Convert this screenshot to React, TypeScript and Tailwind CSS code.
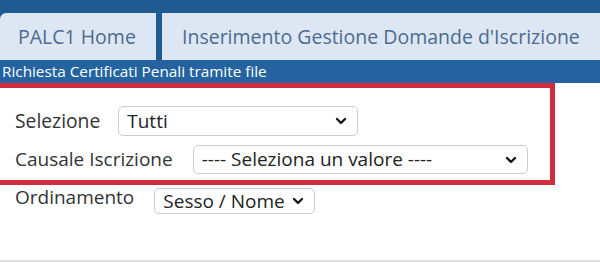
import { ChevronDown } from "lucide-react";

interface FakeSelectProps {
  value: string;
  width: string;
  height: string;
}

function FakeSelect({ value, width, height }: FakeSelectProps) {
  return (
    <div
      className={`flex items-center justify-between rounded-[5px] border border-[#c9ccd1] bg-white pl-2 pr-2 text-[19px] text-[#222] ${width} ${height}`}
    >
      <span className="leading-none">{value}</span>
      <ChevronDown size={16} strokeWidth={3.5} className="text-[#111]" />
    </div>
  );
}

export default function App() {
  return (
    <div className="h-[262px] w-[600px] overflow-hidden border-b-2 border-[#dedede] bg-white font-['Open_Sans',sans-serif]">
      <div className="bg-[#1f5a90] pt-[13px]">
        <div className="flex h-[47px] gap-[6px]">
          <div className="flex w-[156px] items-center rounded-tl-[6px] bg-[#dde7f3] pl-[18px] text-[19.5px] text-[#4d6a90]">
            PALC1 Home
          </div>
          <div className="flex flex-1 items-center bg-[#dde7f3] pl-[20px] text-[19.5px] text-[#4d6a90]">
            Inserimento Gestione Domande d'Iscrizione
          </div>
        </div>
        <div className="h-[23px] bg-[#2463a0] pl-[2px] pt-[2px] text-[15.3px] leading-[18px] text-white">
          Richiesta Certificati Penali tramite file
        </div>
      </div>

      <div className="w-[555px] border-y-[5px] border-r-[5px] border-[#d12b3d] pb-[6px] pl-[15px] pt-[18px]">
        <div className="flex items-center gap-[18px]">
          <span className="text-[19.3px] text-[#333]">Selezione</span>
          <FakeSelect value="Tutti" width="w-[240px]" height="h-[30px]" />
        </div>
        <div className="mt-[9px] flex items-center gap-[20px]">
          <span className="text-[19px] text-[#333]">Causale Iscrizione</span>
          <FakeSelect value="---- Seleziona un valore ----" width="w-[335px]" height="h-[29px]" />
        </div>
      </div>

      <div className="flex items-start gap-[20px] pl-[15px]">
        <span className="text-[19px] leading-[24px] text-[#333]">Ordinamento</span>
        <div className="mt-[3px]">
          <FakeSelect value="Sesso / Nome" width="w-[161px]" height="h-[26px]" />
        </div>
      </div>
    </div>
  );
}
